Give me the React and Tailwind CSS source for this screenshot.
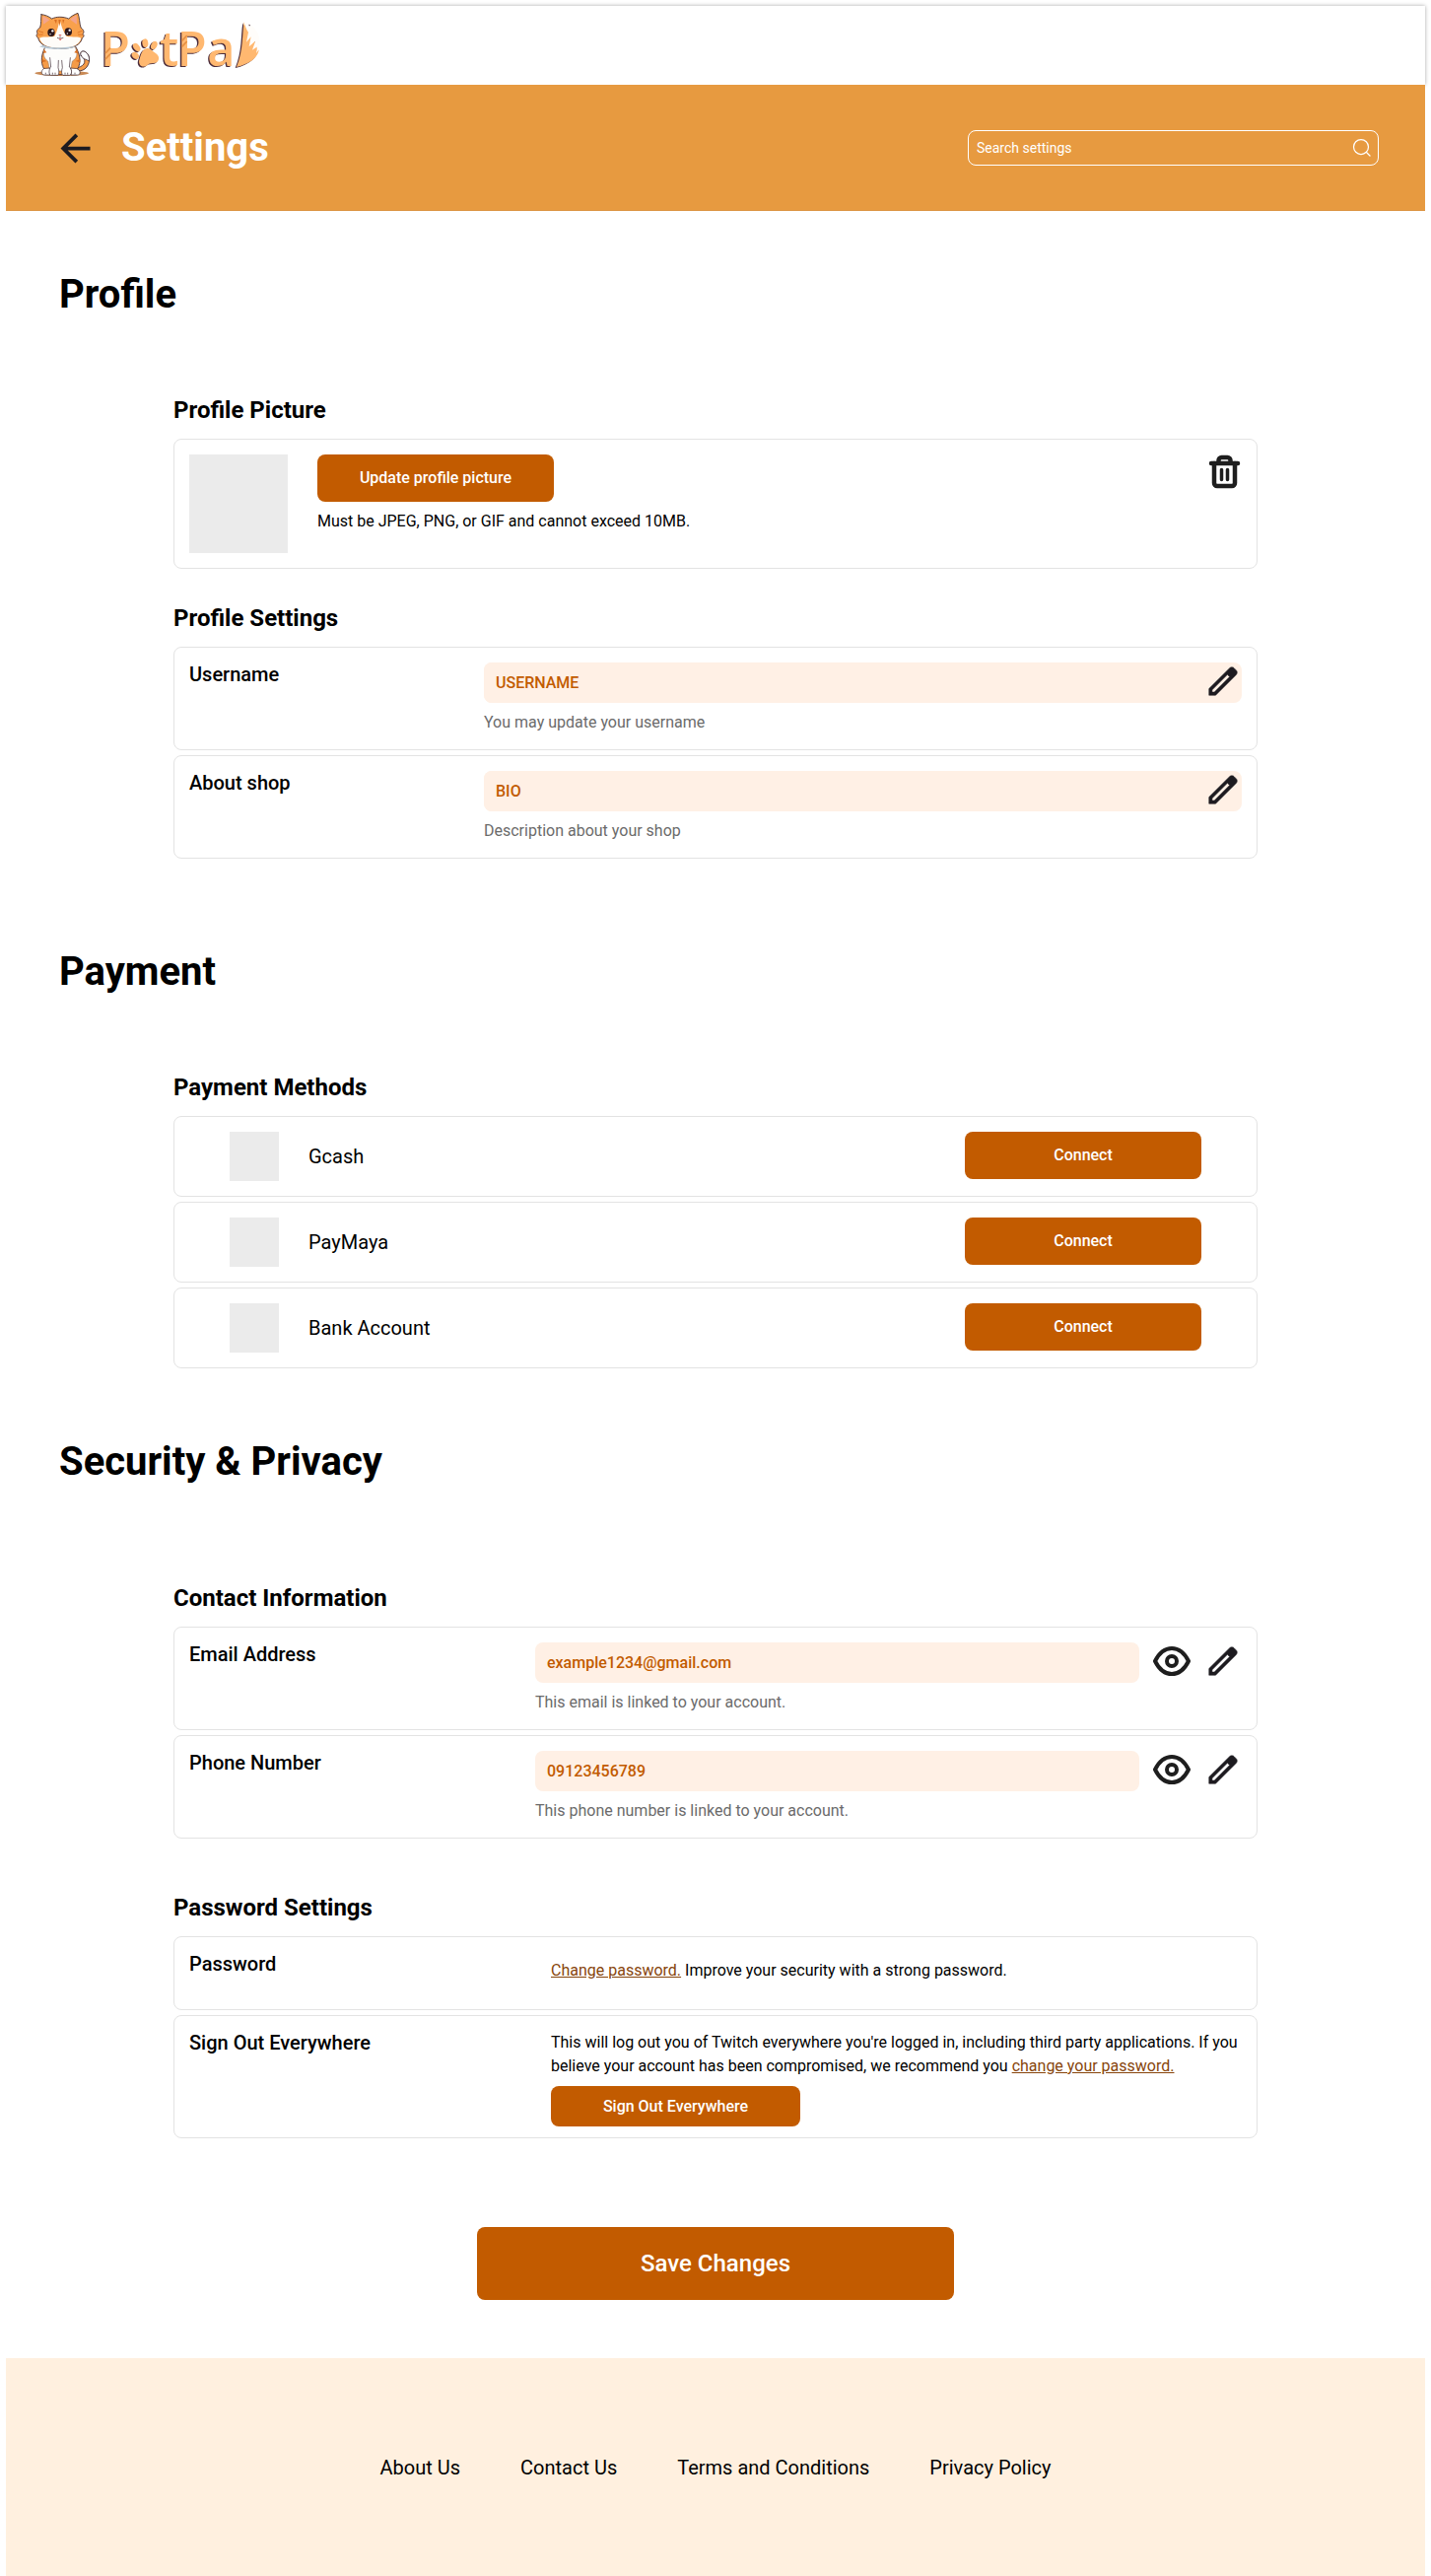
import React from "react";

function Logo() {
  const ink = "#3b2730";
  return (
    <svg viewBox="105 33 690 210" className="h-[70px] w-[230px]" role="img" aria-label="PetPal">
      {/* cat */}
      <ellipse cx="188" cy="223" rx="82" ry="8" fill="#c98a55" />
      <g stroke={ink} strokeWidth="2.5" strokeLinejoin="round" strokeLinecap="round">
        <path d="M236 206 C262 200 262 182 250 172 C240 162 248 152 260 158 C276 168 276 196 258 210 C250 216 240 216 234 214 Z" fill="#f59b47" />
        <path d="M247 170 C241 160 250 152 260 158 C270 165 273 176 271 186 C264 180 254 182 247 170 Z" fill="#ffffff" />
        <path d="M138 142 C126 164 122 190 134 210 C128 216 128 226 138 227 L232 227 C244 226 244 216 236 210 C248 190 244 164 230 142 Z" fill="#f59b47" />
        <path d="M138 144 C128 164 134 178 146 186 L152 216 L214 216 L220 186 C234 178 238 164 229 144 Z" fill="#fdfdfb" stroke="#8a7468" strokeWidth="1.5" />
        <path d="M152 176 L155 204 C146 208 146 228 154 229 L176 229 C181 226 180 214 177 206 L178 184" fill="#ffffff" strokeWidth="2" />
        <path d="M214 176 L211 204 C220 208 220 228 212 229 L192 229 C186 226 187 214 190 206 L188 184" fill="#ffffff" strokeWidth="2" />
        <path d="M133 209 C124 214 125 228 135 228 L152 228 C148 220 150 212 152 208 Z" fill="#ffffff" strokeWidth="2" />
        <path d="M234 209 C247 214 246 228 236 228 L216 228 C219 220 218 212 215 208 Z" fill="#ffffff" strokeWidth="2" />
        <path d="M126 44 C124 58 126 72 122 84 C112 90 110 98 115 102 C108 106 112 114 116 115 C120 136 144 148 184 148 C224 148 246 136 250 116 C254 114 258 108 252 103 C258 98 254 90 246 84 C242 72 242 52 237 40 C226 44 216 50 209 57 C192 50 172 50 158 57 C148 50 138 45 126 44 Z" fill="#f9a14c" />
      </g>
      <path d="M130 50 C140 52 146 56 151 61 L132 74 Z M233 47 C223 50 218 55 214 60 L234 74 Z" fill="#f3a48c" />
      <path d="M182 60 C186 76 190 92 202 110 C222 114 240 110 247 116 C242 136 222 145 184 146 C144 145 126 136 120 116 C128 110 148 114 166 110 C176 92 178 76 182 60 Z" fill="#fefcf8" />
      <path d="M120 142 C148 153 218 153 236 138 C216 146 150 148 132 137 Z" fill="#b9cad6" />
      <path d="M178 60 L181 80 L185 60 Z M165 60 L171 73 L173 60 Z M196 60 L192 73 L190 60 Z M134 150 L142 160 L132 162 Z M234 150 L226 160 L238 163 Z M244 180 L230 186 L244 190 Z M128 180 L142 186 L128 190 Z" fill="#d86f22" />
      <path d="M116 94 L132 99 M115 106 L131 105 M250 94 L236 99 M252 106 L237 105" stroke="#d86f22" strokeWidth="2.5" />
      <ellipse cx="156" cy="99" rx="11" ry="12" fill="#2a171c" />
      <ellipse cx="208" cy="97" rx="11" ry="12" fill="#2a171c" />
      <circle cx="160" cy="94" r="3.5" fill="#fff" />
      <circle cx="212" cy="92" r="3.5" fill="#fff" />
      <circle cx="153" cy="104" r="2" fill="#fff" />
      <circle cx="205" cy="102" r="2" fill="#fff" />
      <path d="M178 105 L188 105 L183 111 Z" fill="#d77474" />
      <path d="M174 115 Q179 119 183 113 Q188 119 193 115" fill="none" stroke={ink} strokeWidth="2" />
      <path d="M179 117 Q183 130 188 117 Z" fill="#e16a66" />
      <path d="M160 221 V227 M168 221 V227 M198 221 V227 M206 221 V227 M139 221 V226 M228 221 V226" stroke={ink} strokeWidth="2" />

      {/* wordmark: a dark copy sits behind the lighter letters as an edge */}
      {[
        { dx: -4, dy: 3, fill: "#4b2c3b" },
        { dx: 0, dy: 0, fill: "#ffb870" },
      ].map((layer) => (
        <g
          key={layer.fill}
          transform={`translate(${layer.dx} ${layer.dy})`}
          fill={layer.fill}
          fontFamily="'Open Sans', 'Noto Sans', sans-serif"
          fontWeight="600"
          fontSize="146"
        >
          <text x="306" y="201">P</text>
          <g>
            <path d="M447 147 C458 145 464 156 474 162 C490 172 484 192 468 192 C458 192 452 194 446 200 C432 208 420 196 424 182 C428 172 430 150 447 147 Z" />
            <ellipse cx="412" cy="169" rx="9" ry="12" transform="rotate(-50 412 169)" />
            <ellipse cx="416" cy="144" rx="9" ry="14" transform="rotate(-38 416 144)" />
            <ellipse cx="442" cy="131" rx="9" ry="13" transform="rotate(-8 442 131)" />
            <ellipse cx="469" cy="138" rx="9" ry="13" transform="rotate(25 469 138)" />
          </g>
          <text x="486" y="201">t</text>
          <text x="539" y="201">P</text>
          <text x="631" y="201">a</text>
          <path d="M743 67 C736 110 742 150 720 204 C756 196 784 178 788 152 C778 154 784 136 781 122 C774 132 768 128 766 104 C756 92 748 84 743 67 Z" />
        </g>
      ))}
      <path d="M743 67 C766 72 788 94 790 122 C791 140 790 152 780 162 L784 142 L768 152 L778 124 L758 142 L764 112 L750 128 L756 98 C750 90 746 80 743 67 Z" fill="#fffdfa" />
      <path d="M757 74 L762 76 L759 80 Z" fill="#4b2c3b" />
      <path d="M321 162 L336 146 M321 180 L336 164 M554 124 L569 108 M554 142 L569 126" stroke="#e58f42" strokeWidth="5" />
    </svg>
  );
}

function PencilIcon() {
  return (
    <svg viewBox="0 -960 960 960" className="size-[38px]" fill="#1d1b20" stroke="#1d1b20" strokeWidth="14" aria-hidden="true">
      <path d="M200-200h57l391-391-57-57-391 391v57Zm-80 80v-170l528-527q12-11 26.500-17t30.500-6q16 0 31 6t26 18l55 56q12 11 17.500 26t5.500 30q0 16-5.500 30.500T817-647L290-120H120Z" />
    </svg>
  );
}

function EyeIcon() {
  return (
    <svg viewBox="0 0 38 38" className="size-[38px]" fill="none" stroke="#1e1e1e" strokeWidth="4" strokeLinejoin="round" aria-hidden="true">
      <path d="M2 19 C6 11 12 6 19 6 C26 6 32 11 36 19 C32 27 26 32 19 32 C12 32 6 27 2 19 Z" />
      <circle cx="19" cy="19" r="5" />
    </svg>
  );
}

function TrashIcon() {
  return (
    <svg viewBox="0 0 36 36" className="size-9" fill="none" stroke="#1e1e1e" strokeWidth="4.500" strokeLinecap="round" strokeLinejoin="round" aria-hidden="true">
      <path d="M5 9 H32" />
      <path d="M8 9 V29 a3 3 0 0 0 3 3 H26 a3 3 0 0 0 3 -3 V9" />
      <path d="M12.500 8 V6 a3 3 0 0 1 3 -3 H21.500 a3 3 0 0 1 3 3 V8" />
      <path d="M15.500 15.500 V25.500 M21.500 15.500 V25.500" strokeWidth="3.500" />
    </svg>
  );
}

function IconButton({ label, children }) {
  return (
    <button type="button" aria-label={label} className="shrink-0">
      {children}
    </button>
  );
}

const card = "rounded-lg border border-[#e3e3e3] p-[15px]";
const orangeButton = "rounded-lg bg-[#c25b00] text-base font-medium text-white";
const fieldInput = "h-[41px] w-full min-w-0 flex-1 rounded-lg bg-[#fff0e5] px-3 text-base font-medium text-[#c25b00] outline-none";
const rowLabel = "shrink-0 text-xl/6 font-medium";

function Section({ title, className, children }) {
  return (
    <section className={className}>
      <h2 className="pl-[54px] text-[40px] leading-10 font-bold">{title}</h2>
      {children}
    </section>
  );
}

function Group({ title, className, children }) {
  return (
    <div className={`mx-auto w-full max-w-[1100px] ${className}`}>
      <h3 className="mb-[15px] text-2xl/7 font-bold">{title}</h3>
      <div className="flex flex-col gap-[5px]">{children}</div>
    </div>
  );
}

function ProfileField({ id, label, value, help }) {
  return (
    <div className={`${card} flex`}>
      <label htmlFor={id} className={`${rowLabel} w-[299px]`}>{label}</label>
      <div className="flex-1">
        <div className="flex h-[41px] items-start rounded-lg bg-[#fff0e5]">
          <input id={id} type="text" defaultValue={value} className={fieldInput} />
          <IconButton label={`Edit ${label}`}><PencilIcon /></IconButton>
        </div>
        <p className="mt-2 text-base/6 text-[#6b6b6b]">{help}</p>
      </div>
    </div>
  );
}

function ContactField({ id, type, label, value, help }) {
  return (
    <div className={`${card} flex`}>
      <label htmlFor={id} className={`${rowLabel} w-[351px]`}>{label}</label>
      <div className="flex-1">
        <div className="flex items-start gap-[14px]">
          <input id={id} type={type} defaultValue={value} className={fieldInput} />
          <IconButton label={`Show ${label}`}><EyeIcon /></IconButton>
          <IconButton label={`Edit ${label}`}><PencilIcon /></IconButton>
        </div>
        <p className="mt-2 text-base/6 text-[#6b6b6b]">{help}</p>
      </div>
    </div>
  );
}

export default function App() {
  return (
    <div className="bg-white px-1.5 pt-1.5 font-['Roboto',sans-serif] text-black">
      <header className="flex h-20 items-center bg-white pl-[29px] shadow-[0_0_4px_rgba(0,0,0,0.35)]">
        <Logo />
      </header>

      <div className="relative flex h-32 items-center justify-between bg-[#e79a40] pr-[47px] pl-12 shadow-[inset_0_-1px_0_#dc9544]">
        <div className="flex items-center gap-6">
          <button type="button" aria-label="Back">
            <svg viewBox="0 0 24 24" className="size-[45px]" fill="#1d1b20" aria-hidden="true">
              <path d="M20 11H7.830l5.590-5.590L12 4l-8 8 8 8 1.410-1.410L7.830 13H20v-2z" />
            </svg>
          </button>
          <h1 className="text-[40px] leading-10 font-bold text-white">Settings</h1>
        </div>
        <label className="flex h-9 w-[417px] items-center rounded-lg border border-white pr-1.5 pl-2">
          <input
            type="search"
            aria-label="Search settings"
            placeholder="Search settings"
            className="min-w-0 flex-1 bg-transparent text-sm text-white outline-none placeholder:text-white"
          />
          <svg viewBox="0 0 20 20" className="size-5" fill="none" stroke="#fff" strokeWidth="1.250" strokeLinecap="round" aria-hidden="true">
            <circle cx="9" cy="9" r="7.500" />
            <path d="M14.500 14.500 L18 18" />
          </svg>
        </label>
      </div>

      <main>
        <Section title="Profile" className="pt-[65px]">
          <Group title="Profile Picture" className="pt-[83px]">
            <div className={`${card} flex items-start`}>
              <div className="size-[100px] shrink-0 bg-[#ebebeb]" />
              <div className="ml-[30px] flex-1">
                <button type="button" className={`${orangeButton} h-12 w-60`}>Update profile picture</button>
                <p className="mt-2 text-base/6">Must be JPEG, PNG, or GIF and cannot exceed 10MB.</p>
              </div>
              <IconButton label="Delete profile picture"><TrashIcon /></IconButton>
            </div>
          </Group>
          <Group title="Profile Settings" className="pt-9">
            <ProfileField id="username" label="Username" value="USERNAME" help="You may update your username" />
            <ProfileField id="about" label="About shop" value="BIO" help="Description about your shop" />
          </Group>
        </Section>

        <Section title="Payment" className="pt-[95px]">
          <Group title="Payment Methods" className="pt-[83px]">
            {["Gcash", "PayMaya", "Bank Account"].map((name) => (
              <div key={name} className="flex items-start rounded-lg border border-[#e3e3e3] px-14 py-[15px]">
                <div className="size-[50px] bg-[#ebebeb]" />
                <span className="ml-[30px] flex-1 text-xl/[50px]">{name}</span>
                <button type="button" className={`${orangeButton} h-12 w-60`}>Connect</button>
              </div>
            ))}
          </Group>
        </Section>

        <Section title="Security &amp; Privacy" className="pt-[75px]">
          <Group title="Contact Information" className="pt-[104px]">
            <ContactField id="email" type="email" label="Email Address" value="example1234@gmail.com" help="This email is linked to your account." />
            <ContactField id="phone" type="tel" label="Phone Number" value="09123456789" help="This phone number is linked to your account." />
          </Group>
          <Group title="Password Settings" className="pt-14">
            <div className={`${card} flex`}>
              <h4 className={`${rowLabel} w-[367px]`}>Password</h4>
              <p className="flex-1 pt-[7px] pb-3 text-base/6">
                <a href="#password" className="text-[#87450c] underline">Change password.</a> Improve your security with a strong password.
              </p>
            </div>
            <div className="flex rounded-lg border border-[#e3e3e3] px-[15px] pt-[15px] pb-[11px]">
              <h4 className={`${rowLabel} w-[367px]`}>Sign Out Everywhere</h4>
              <div className="flex-1">
                <p className="text-base/6">
                  This will log out you of Twitch everywhere you're logged in, including third party applications. If you
                  believe your account has been compromised, we recommend you{" "}
                  <a href="#password" className="text-[#87450c] underline">change your password.</a>
                </p>
                <button type="button" className={`${orangeButton} mt-2 block h-[41px] w-[253px]`}>Sign Out Everywhere</button>
              </div>
            </div>
          </Group>
        </Section>

        <div className="flex justify-center pt-[90px] pb-[59px]">
          <button type="button" className="h-[74px] w-[484px] rounded-lg bg-[#c25b00] text-2xl font-medium text-white">
            Save Changes
          </button>
        </div>
      </main>

      <footer className="bg-[#fff0df] pt-[99px] pb-[98px]">
        <nav className="flex flex-wrap justify-center gap-x-[61px] text-xl/6">
          <a href="#about-us">About Us</a>
          <a href="#contact">Contact Us</a>
          <a href="#terms">Terms and Conditions</a>
          <a href="#privacy">Privacy Policy</a>
        </nav>
      </footer>
    </div>
  );
}
